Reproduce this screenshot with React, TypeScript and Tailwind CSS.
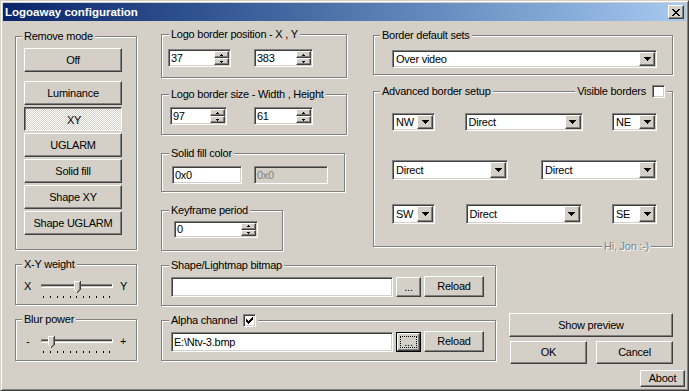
import React from "react";

type P = { children?: React.ReactNode; className?: string };

const sunken =
  "border border-t-[#808080] border-l-[#808080] border-r-white border-b-white shadow-[inset_1px_1px_0_#404040,inset_-1px_-1px_0_#d4d0c8]";

function Raised({ children, className = "" }: P) {
  return (
    <div
      className={`flex items-center justify-center bg-[#d4d0c8] border border-t-white border-l-white border-r-[#404040] border-b-[#404040] shadow-[inset_-1px_-1px_0_#808080] ${className}`}
    >
      {children}
    </div>
  );
}

function Pressed({ children, className = "" }: P) {
  return (
    <div
      className={`flex items-center justify-center border border-t-[#404040] border-l-[#404040] border-r-white border-b-white shadow-[inset_1px_1px_0_#808080] bg-[conic-gradient(#fff_90deg,#d4d0c8_90deg_180deg,#fff_180deg_270deg,#d4d0c8_270deg)] bg-[length:2px_2px] ${className}`}
    >
      <span className="translate-x-[1px] translate-y-[1px]">{children}</span>
    </div>
  );
}

function Pix({ pts, fill }: { pts: [number, number, number?][]; fill: string }) {
  return (
    <>
      {pts.map(([x, y, w], i) => (
        <rect key={i} x={x} y={y} width={w ?? 1} height={1} fill={fill} />
      ))}
    </>
  );
}

function UpArrow() {
  return (
    <svg width="3" height="2" shapeRendering="crispEdges">
      <Pix fill="#000" pts={[[1, 0, 1], [0, 1, 3]]} />
    </svg>
  );
}
function DownArrow() {
  return (
    <svg width="3" height="2" shapeRendering="crispEdges">
      <Pix fill="#000" pts={[[0, 0, 3], [1, 1, 1]]} />
    </svg>
  );
}
function DropArrow() {
  return (
    <svg width="7" height="4" shapeRendering="crispEdges">
      <Pix fill="#000" pts={[[0, 0, 7], [1, 1, 5], [2, 2, 3], [3, 3, 1]]} />
    </svg>
  );
}

function Edit({ value, className = "", disabled }: { value: string; className?: string; disabled?: boolean }) {
  return (
    <div
      className={`${sunken} p-[1px] flex items-center ${disabled ? "bg-[#d4d0c8] text-[#808080]" : "bg-white"} ${className}`}
    >
      <span className="pl-[1px] whitespace-nowrap">{value}</span>
    </div>
  );
}

function Spin({ value, className = "" }: { value: string; className?: string }) {
  return (
    <div className={`${sunken} p-[1px] flex bg-white ${className}`}>
      <div className="flex-1 flex items-center pl-[1px] min-w-0">{value}</div>
      <div className="w-[15px] flex flex-col">
        <Raised className="flex-1 min-h-0">
          <UpArrow />
        </Raised>
        <Raised className="flex-1 min-h-0">
          <DownArrow />
        </Raised>
      </div>
    </div>
  );
}

function Combo({ value, className = "" }: { value: string; className?: string }) {
  return (
    <div className={`${sunken} p-[1px] flex bg-white ${className}`}>
      <div className="flex-1 flex items-center pl-[2px] min-w-0 whitespace-nowrap">{value}</div>
      <Raised className="w-[16px]">
        <DropArrow />
      </Raised>
    </div>
  );
}

function Check({ checked }: { checked?: boolean }) {
  return (
    <div className={`${sunken} w-[13px] h-[13px] bg-white flex items-center justify-center shrink-0`}>
      {checked && (
        <svg width="7" height="7" shapeRendering="crispEdges">
          <Pix
            fill="#000"
            pts={[
              [6, 0, 1],
              [5, 1, 2],
              [0, 2, 1],
              [4, 2, 3],
              [0, 3, 2],
              [3, 3, 3],
              [0, 4, 5],
              [1, 5, 3],
              [2, 6, 1],
            ]}
          />
        </svg>
      )}
    </div>
  );
}

function Group({
  label,
  labelLeft = "left-[6px]",
  className = "",
  children,
  extra,
}: {
  label: React.ReactNode;
  labelLeft?: string;
  className?: string;
  children?: React.ReactNode;
  extra?: React.ReactNode;
}) {
  return (
    <div
      className={`relative border border-[#808080] shadow-[inset_1px_1px_0_#fff,1px_1px_0_#fff] ${className}`}
    >
      <div className={`absolute ${labelLeft} top-[-7px] bg-[#d4d0c8] px-[2px] h-[13px] flex items-center whitespace-nowrap`}>
        {label}
      </div>
      {extra}
      {children}
    </div>
  );
}

function SliderRow({ l, r, pos, lClass = "" }: { l: string; r: string; pos: number; lClass?: string }) {
  const ticks = Array.from({ length: 11 }, (_, i) => Math.round(3.3 + i * 6.6));
  const tx = ticks[pos] - 2;
  return (
    <div className="flex pl-[8px] pt-[15px]">
      <div className={`w-[16px] h-[12px] leading-[12px] ${lClass}`}>{l}</div>
      <svg width="74" height="19" shapeRendering="crispEdges">
        <rect x="1" y="4" width="72" height="1" fill="#808080" />
        <rect x="1" y="4" width="1" height="4" fill="#808080" />
        <rect x="2" y="5" width="70" height="1" fill="#404040" />
        <rect x="2" y="5" width="1" height="2" fill="#404040" />
        <rect x="2" y="6" width="70" height="1" fill="#d4d0c8" />
        <rect x="1" y="7" width="72" height="1" fill="#fff" />
        <rect x="72" y="4" width="1" height="4" fill="#fff" />
        {ticks.map((x, i) => (
          <rect key={i} x={x} y="16" width="1" height="2" fill="#000" />
        ))}
        <g transform={`translate(${tx},1)`}>
          <rect x="0" y="0" width="7" height="9" fill="#d4d0c8" />
          <Pix fill="#d4d0c8" pts={[[1, 9, 5], [2, 10, 3], [3, 11, 1]]} />
          <rect x="0" y="0" width="6" height="1" fill="#fff" />
          <rect x="0" y="0" width="1" height="9" fill="#fff" />
          <Pix fill="#fff" pts={[[1, 9], [2, 10]]} />
          <rect x="5" y="1" width="1" height="8" fill="#808080" />
          <Pix fill="#808080" pts={[[4, 9], [3, 10]]} />
          <rect x="6" y="0" width="1" height="9" fill="#404040" />
          <Pix fill="#404040" pts={[[5, 9], [4, 10], [3, 11]]} />
        </g>
      </svg>
      <div className="ml-[6px] h-[12px] leading-[12px]">{r}</div>
    </div>
  );
}

function FocusBtn({ className = "" }: { className?: string }) {
  return (
    <div className={`border border-black flex ${className}`}>
      <Raised className="flex-1 relative">
        <div className="absolute inset-[2px] border border-dotted border-black" />
        <span>...</span>
      </Raised>
    </div>
  );
}

function CloseGlyph() {
  return (
    <svg width="8" height="7" shapeRendering="crispEdges">
      <Pix
        fill="#000"
        pts={[
          [0, 0, 2],
          [6, 0, 2],
          [1, 1, 2],
          [5, 1, 2],
          [2, 2, 4],
          [3, 3, 2],
          [2, 4, 4],
          [1, 5, 2],
          [5, 5, 2],
          [0, 6, 2],
          [6, 6, 2],
        ]}
      />
    </svg>
  );
}

export default function App() {
  const rmBtn = "w-[98px] h-[24px] mt-[2px]";
  return (
    <div className="w-[689px] h-[391px] flex flex-col bg-[#d4d0c8] border border-t-[#d4d0c8] border-l-[#d4d0c8] border-r-[#404040] border-b-[#404040] shadow-[inset_1px_1px_0_#fff,inset_-1px_-1px_0_#808080] p-[2px] font-['Liberation_Sans',Arial,sans-serif] text-[11px] leading-[13px] tracking-[-0.25px] text-black select-none">
      {/* Title bar */}
      <div className="h-[18px] shrink-0 flex items-center bg-linear-to-r from-[#0a246a] to-[#a6caf0] pl-[2px] pr-[2px]">
        <span className="flex-1 text-white font-bold text-[11.5px] tracking-[0px]">Logoaway configuration</span>
        <Raised className="w-[16px] h-[14px]">
          <CloseGlyph />
        </Raised>
      </div>

      {/* Body */}
      <div className="flex pl-[12px]">
        {/* Left column */}
        <div className="w-[122px] flex flex-col pt-[15px]">
          <Group label="Remove mode" className="h-[214px] pl-[8px] pt-[11px]">
            <Raised className="w-[98px] h-[24px]">Off</Raised>
            <Raised className="w-[98px] h-[24px] mt-[9px]">Luminance</Raised>
            <Pressed className={rmBtn}>XY</Pressed>
            <Raised className={rmBtn}>UGLARM</Raised>
            <Raised className={rmBtn}>Solid fill</Raised>
            <Raised className={rmBtn}>Shape XY</Raised>
            <Raised className={rmBtn}>Shape UGLARM</Raised>
          </Group>
          <Group label="X-Y weight" className="h-[41px] mt-[14px]">
            <SliderRow l="X" r="Y" pos={5} />
          </Group>
          <Group label="Blur power" className="h-[42px] mt-[14px]">
            <SliderRow l="-" r="+" pos={1} lClass="pl-[2px]" />
          </Group>
        </div>

        {/* Right area */}
        <div className="ml-[24px] w-[524px] flex flex-col">
          <div className="flex">
            {/* Middle column */}
            <div className="w-[186px] flex flex-col pt-[13px]">
              <Group label="Logo border position - X , Y" labelLeft="left-[7px]" className="h-[44px] pl-[6px] pt-[14px]">
                <div className="flex">
                  <Spin value="37" className="w-[63px] h-[18px]" />
                  <Spin value="383" className="w-[59px] h-[18px] ml-[23px]" />
                </div>
              </Group>
              <Group label="Logo border size - Width , Height" labelLeft="left-[7px]" className="h-[41px] mt-[16px] pl-[8px] pt-[12px]">
                <div className="flex">
                  <Spin value="97" className="w-[57px] h-[18px]" />
                  <Spin value="61" className="w-[59px] h-[18px] ml-[27px]" />
                </div>
              </Group>
              <Group label="Solid fill color" labelLeft="left-[7px]" className="w-[184px] h-[39px] mt-[18px] pl-[10px] pt-[12px]">
                <div className="flex">
                  <Edit value="0x0" className="w-[70px] h-[18px]" />
                  <Edit value="0x0" disabled className="w-[74px] h-[18px] ml-[12px]" />
                </div>
              </Group>
              <Group label="Keyframe period" labelLeft="left-[7px]" className="w-[122px] h-[41px] mt-[18px] pl-[12px] pt-[10px]">
                <Spin value="0" className="w-[84px] h-[17px]" />
              </Group>
            </div>

            {/* Right column */}
            <div className="ml-[26px] w-[300px] flex flex-col pt-[14px]">
              <Group label="Border default sets" className="h-[40px] pl-[18px] pt-[14px]">
                <Combo value="Over video" className="w-[265px] h-[18px]" />
              </Group>
              <Group
                label="Advanced border setup"
                className="h-[156px] mt-[16px] pl-[18px] pt-[21px]"
                extra={
                  <>
                    <div className="absolute right-[5px] top-[-7px] bg-[#d4d0c8] px-[2px] h-[13px] flex items-center whitespace-nowrap">
                      <span>Visible borders</span>
                      <div className="ml-[6px]">
                        <Check />
                      </div>
                    </div>
                    <div className="absolute right-[21px] bottom-[-7px] bg-[#d4d0c8] px-[2px] h-[13px] flex items-center whitespace-nowrap text-[#808080] [text-shadow:1px_1px_0_#fff]">
                      Hi, Jon :-)
                    </div>
                  </>
                }
              >
                <div className="w-[265px] flex flex-col">
                  <div className="flex justify-between">
                    <Combo value="NW" className="w-[43px] h-[18px]" />
                    <Combo value="Direct" className="w-[118px] h-[18px]" />
                    <Combo value="NE" className="w-[45px] h-[18px]" />
                  </div>
                  <div className="flex justify-between mt-[29px]">
                    <Combo value="Direct" className="w-[116px] h-[20px]" />
                    <Combo value="Direct" className="w-[116px] h-[20px]" />
                  </div>
                  <div className="flex justify-between mt-[24px]">
                    <Combo value="SW" className="w-[43px] h-[20px]" />
                    <Combo value="Direct" className="w-[116px] h-[20px]" />
                    <Combo value="SE" className="w-[45px] h-[20px]" />
                  </div>
                </div>
              </Group>
            </div>
          </div>

          {/* Bottom row */}
          <div className="flex mt-[14px]">
            <div className="w-[335px] flex flex-col">
              <Group label="Shape/Lightmap bitmap" labelLeft="left-[7px]" className="h-[41px] pl-[9px] pt-[11px]">
                <div className="flex items-start">
                  <Edit value="" className="w-[222px] h-[20px]" />
                  <Raised className="w-[25px] h-[20px] ml-[3px]">...</Raised>
                  <Raised className="w-[60px] h-[21px] ml-[3px] mt-[-1px]">Reload</Raised>
                </div>
              </Group>
              <Group
                label={
                  <div className="flex items-center">
                    <span>Alpha channel</span>
                    <div className="ml-[6px]">
                      <Check checked />
                    </div>
                  </div>
                }
                labelLeft="left-[7px]"
                className="h-[41px] mt-[14px] pl-[9px] pt-[11px]"
              >
                <div className="flex items-start">
                  <Edit value="E:\Ntv-3.bmp" className="w-[222px] h-[20px]" />
                  <FocusBtn className="w-[25px] h-[20px] ml-[3px]" />
                  <Raised className="w-[60px] h-[21px] ml-[3px] mt-[-1px]">Reload</Raised>
                </div>
              </Group>
            </div>

            <div className="ml-[13px] w-[176px] flex flex-col pt-[48px]">
              <Raised className="w-[164px] h-[24px]">Show preview</Raised>
              <div className="flex mt-[4px] pl-[1px]">
                <Raised className="w-[77px] h-[23px]">OK</Raised>
                <Raised className="w-[77px] h-[23px] ml-[9px]">Cancel</Raised>
              </div>
              <Raised className="w-[45px] h-[17px] mt-[6px] self-end">Aboot</Raised>
            </div>
          </div>
        </div>
      </div>
    </div>
  );
}
